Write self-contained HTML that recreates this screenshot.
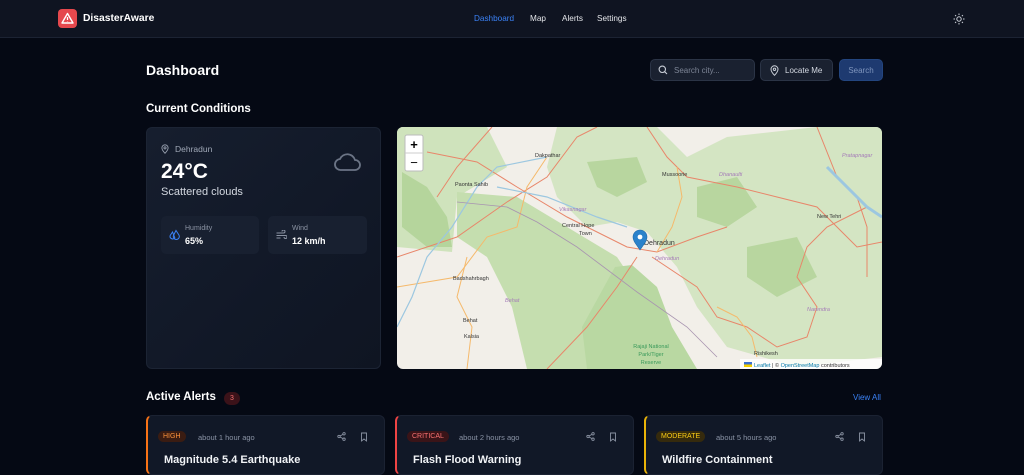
<!DOCTYPE html>
<html><head><meta charset="utf-8"><style>
*{box-sizing:border-box;margin:0;padding:0}
body{width:1024px;height:469px;overflow:hidden;background:#050914;font-family:"Liberation Sans",sans-serif;color:#fff;position:relative}
.abs{position:absolute}
nav{position:absolute;left:0;top:0;width:1024px;height:38px;background:#0f1421;border-bottom:1px solid #1c2333}
.btn{position:absolute;border:1px solid #2b3446;background:#1a2130;border-radius:5px;font-size:8px;color:#d5dae3;display:flex;align-items:center}
.card{position:absolute;background:#111827;border-radius:6px;top:415px;height:60px;border:1px solid #1b2232}
.tag{position:absolute;left:10px;top:15px;font-size:7px;padding:2px 5px;border-radius:7px}
.ago{position:absolute;top:17px;font-size:7.5px;color:#8a93a5}
.ttl{position:absolute;left:16px;top:38px;font-size:11px;font-weight:bold;color:#f1f3f6}
</style></head><body>
<nav>
<div class="abs" style="left:58px;top:9px;width:19px;height:19px;background:#e5484d;border-radius:4px"><svg width="19" height="19" viewBox="0 0 19 19"><path d="M9.5 4.5L15 14H4z" fill="none" stroke="#fff" stroke-width="1.4" stroke-linejoin="round"/><path d="M9.5 8v3M9.5 12.4v.3" stroke="#fff" stroke-width="1.3"/></svg></div>
<div class="abs" style="left:83px;top:13px;font-size:10.3px;font-weight:bold">DisasterAware</div>
<div class="abs" style="left:474px;top:14px;font-size:8.2px;color:#3b82f6">Dashboard</div>
<div class="abs" style="left:530px;top:14px;font-size:8.2px;color:#e5e7eb">Map</div>
<div class="abs" style="left:562px;top:14px;font-size:8.2px;color:#e5e7eb">Alerts</div>
<div class="abs" style="left:597px;top:14px;font-size:8.2px;color:#e5e7eb">Settings</div>
<svg class="abs" style="left:953px;top:13px" width="12" height="12" viewBox="0 0 12 12" stroke="#cbd0d8" stroke-width="1" fill="none"><circle cx="6" cy="6" r="2.2"/><path d="M6 0.5v1.5M6 10v1.5M0.5 6h1.5M10 6h1.5M2.1 2.1l1 1M8.9 8.9l1 1M2.1 9.9l1-1M8.9 3.1l1-1"/></svg>
</nav>
<div class="abs" style="left:146px;top:62px;font-size:14px;font-weight:bold">Dashboard</div>
<div class="btn" style="left:650px;top:59px;width:105px;height:22px"><svg style="margin:0 6px 0 7px" width="10" height="10" viewBox="0 0 10 10" fill="none" stroke="#c8cdd6" stroke-width="1.1"><circle cx="4.3" cy="4.3" r="3.2"/><path d="M6.7 6.7L9 9"/></svg><span style="color:#7d8596">Search city...</span></div>
<div class="btn" style="left:760px;top:59px;width:73px;height:22px"><svg style="margin:0 6px 0 9px" width="9" height="11" viewBox="0 0 9 11" fill="none" stroke="#c8cdd6" stroke-width="1"><path d="M4.5 10.3S1 6.8 1 4.3a3.5 3.5 0 017 0c0 2.5-3.5 6-3.5 6z"/><circle cx="4.5" cy="4.3" r="1.2"/></svg>Locate Me</div>
<div class="btn" style="left:839px;top:59px;width:44px;height:22px;background:#1e3a70;border-color:#23457f;color:#7f95bd;justify-content:center">Search</div>
<div class="abs" style="left:146px;top:103px;font-size:11.5px;font-weight:bold">Current Conditions</div>
<div class="abs" style="left:146px;top:127px;width:235px;height:242px;border-radius:6px;background:linear-gradient(135deg,#161e2e,#111827 60%,#0f1522);border:1px solid #1c2434">
<svg class="abs" style="left:14px;top:16px" width="8" height="10" viewBox="0 0 9 11" fill="none" stroke="#9aa2b1" stroke-width="1"><path d="M4.5 10.3S1 6.8 1 4.3a3.5 3.5 0 017 0c0 2.5-3.5 6-3.5 6z"/><circle cx="4.5" cy="4.3" r="1.2"/></svg>
<div class="abs" style="left:28px;top:16px;font-size:8.5px;color:#a1a9b8">Dehradun</div>
<div class="abs" style="left:14px;top:32px;font-size:21px;font-weight:bold">24°C</div>
<div class="abs" style="left:14px;top:58px;font-size:11px;color:#d3d8e0">Scattered clouds</div>
<svg class="abs" style="left:186px;top:22px" width="29" height="22" viewBox="0 0 29 22" fill="none" stroke="#6b7485" stroke-width="1.8"><path d="M8 20h14a5 5 0 000-10 8 8 0 00-15-1A5.5 5.5 0 008 20z"/></svg>
<div class="abs" style="left:14px;top:88px;width:98px;height:38px;background:#182030;border-radius:5px">
<svg class="abs" style="left:8px;top:13px" width="11" height="12" viewBox="0 0 11 12" fill="none" stroke="#3b82f6" stroke-width="1"><path d="M3.5 3L1.2 6.5a2.6 2.6 0 004.6 2.3z"/><path d="M7 1.5L4.7 6a3 3 0 105.2 0z"/></svg>
<div class="abs" style="left:24px;top:9px;font-size:7px;color:#8b93a3">Humidity</div>
<div class="abs" style="left:24px;top:20px;font-size:9px;font-weight:bold">65%</div></div>
<div class="abs" style="left:121px;top:88px;width:99px;height:38px;background:#182030;border-radius:5px">
<svg class="abs" style="left:8px;top:14px" width="11" height="10" viewBox="0 0 11 10" fill="none" stroke="#8b93a3" stroke-width="1"><path d="M0.5 3h7a1.5 1.5 0 10-1.5-1.5M0.5 5.5h9a1.5 1.5 0 11-1.5 1.5M0.5 8h4"/></svg>
<div class="abs" style="left:24px;top:9px;font-size:7px;color:#8b93a3">Wind</div>
<div class="abs" style="left:24px;top:20px;font-size:9px;font-weight:bold">12 km/h</div></div>
</div>
<div class="abs" style="left:397px;top:127px;width:485px;height:242px;border-radius:6px;overflow:hidden;background:#f2efe9">
<svg width="485" height="242" viewBox="0 0 485 242" style="display:block" font-family="Liberation Sans" font-size="5.5">
<path d="M0 0H90L110 40 60 70 55 125 0 120z" fill="#cfe3bc"/>
<path d="M160 0H260L290 30 330 10 420 0H485V230L400 240 330 220 300 180 280 140 250 105 220 95 190 100 160 70 150 40z" fill="#cfe3bc" opacity=".85"/>
<path d="M60 65L120 70 170 100 220 130 240 160 230 200 200 242H130L115 180 90 130 60 110z" fill="#c5deaf"/>
<path d="M218 140L235 138 260 160 275 200 300 242H190L185 200z" fill="#b9d8a2"/>
<path d="M5 45L30 60 50 90 55 120 30 120 5 100z" fill="#b5d59c"/>
<path d="M190 35L240 30 250 55 220 70 200 60z M300 60L340 50 360 80 330 100 300 90z M350 120L400 110 420 150 380 170 350 150z" fill="#b8d69f"/>
<g fill="none" stroke="#e8866a" stroke-width="1">
<path d="M0 130L60 110 110 75 150 50 180 10 200 0"/><path d="M30 25L80 35 120 60 170 90 230 120 260 125 300 110 330 100"/><path d="M240 130L220 160 190 200 150 242"/><path d="M255 130L300 160 320 190 350 200 380 220 410 210 420 180 400 150 410 120 430 100 470 80 485 90"/><path d="M250 0L270 30 290 50 340 60 380 70 420 80 440 100 460 120 485 115"/><path d="M420 0L440 50 460 70 470 100 470 150"/><path d="M95 0L60 40 40 70"/>
</g>
<g fill="none" stroke="#f5b96b" stroke-width="1"><path d="M0 160L60 150 90 110 120 100 130 60 150 30"/><path d="M70 130L60 170 75 200 70 242"/><path d="M280 40L285 70 275 100 260 125"/><path d="M320 180L340 190 355 210 360 230"/></g>
<g fill="none" stroke="#9cc7e0" stroke-width="1.2"><path d="M0 200L15 170 30 130 55 100 80 60 100 40 150 30"/><path d="M100 60L150 70 200 90 230 100"/><path d="M430 40L450 60 470 80 485 90" stroke-width="3"/></g>
<g fill="none" stroke="#a894b0" stroke-width=".8"><path d="M60 75L110 80 140 95 180 120 220 150 240 165 290 200 320 230"/></g>
<g fill="#333"><text x="138" y="30">Dakpathar</text><text x="58" y="59">Paonta Sahib</text><text x="265" y="49">Mussoorie</text><text x="165" y="100">Central Hope</text><text x="182" y="108">Town</text><text x="56" y="153">Badshahrbagh</text><text x="66" y="195">Behat</text><text x="67" y="211">Kalsia</text><text x="420" y="91">New Tehri</text><text x="357" y="228">Rishikesh</text><text x="247" y="118" font-size="7">Dehradun</text></g>
<g fill="#a57cb8" font-style="italic"><text x="162" y="84">Vikasnagar</text><text x="322" y="49">Dhanaulti</text><text x="445" y="30">Pratapnagar</text><text x="258" y="133">Dehradun</text><text x="410" y="184">Narendra</text><text x="108" y="175">Behat</text></g>
<g fill="#3a9a5b" text-anchor="middle"><text x="254" y="221">Rajaji National</text><text x="254" y="229">Park/Tiger</text><text x="254" y="237">Reserve</text></g>
<path d="M243 123c-4-6-7-9-7-13a7 7 0 0114 0c0 4-3 7-7 13z" fill="#2b82cb" stroke="#1e6aa8" stroke-width=".6"/><circle cx="243" cy="110" r="2.4" fill="#fff"/>
<rect x="8" y="8" width="18" height="36" rx="2" fill="#fff" stroke="#bbb"/><line x1="8" y1="26" x2="26" y2="26" stroke="#ccc"/>
<text x="17" y="22" font-size="13" text-anchor="middle" fill="#000" font-weight="bold">+</text><text x="17" y="40" font-size="13" text-anchor="middle" fill="#000">−</text>
<rect x="343" y="232" width="142" height="10" fill="#fff" opacity=".8"/><rect x="347" y="235" width="8" height="2.5" fill="#3a6fd1"/><rect x="347" y="237.5" width="8" height="2.5" fill="#f5d000"/>
<text x="357" y="240" fill="#0078a8">Leaflet <tspan fill="#333">| © </tspan>OpenStreetMap<tspan fill="#333"> contributors</tspan></text>
</svg></div>
<div class="abs" style="left:146px;top:391px;font-size:11.5px;font-weight:bold">Active Alerts</div>
<div class="abs" style="left:224px;top:392px;width:16px;height:13px;border-radius:7px;background:#3b1219;color:#f87171;font-size:7px;text-align:center;line-height:13px">3</div>
<div class="abs" style="left:853px;top:393px;font-size:8px;color:#3b82f6">View All</div>
<div class="card" style="left:146px;width:239px;border-left:2px solid #f97316"><div class="tag" style="background:#3a1c12;color:#fb923c">HIGH</div><div class="ago" style="left:50px">about 1 hour ago</div><div class="ttl">Magnitude 5.4 Earthquake</div></div>
<div class="card" style="left:395px;width:239px;border-left:2px solid #ef4444"><div class="tag" style="background:#3a1418;color:#f87171">CRITICAL</div><div class="ago" style="left:62px">about 2 hours ago</div><div class="ttl">Flash Flood Warning</div></div>
<div class="card" style="left:644px;width:239px;border-left:2px solid #eab308"><div class="tag" style="background:#352a0d;color:#facc15">MODERATE</div><div class="ago" style="left:70px">about 5 hours ago</div><div class="ttl">Wildfire Containment</div></div>
<svg class="abs" style="left:337px;top:432px" width="9" height="9" viewBox="0 0 9 9" fill="none" stroke="#8b93a3" stroke-width=".9"><circle cx="7" cy="1.8" r="1.2"/><circle cx="2" cy="4.5" r="1.2"/><circle cx="7" cy="7.2" r="1.2"/><path d="M3 4l3-1.6M3 5l3 1.6"/></svg>
<svg class="abs" style="left:586px;top:432px" width="9" height="9" viewBox="0 0 9 9" fill="none" stroke="#8b93a3" stroke-width=".9"><circle cx="7" cy="1.8" r="1.2"/><circle cx="2" cy="4.5" r="1.2"/><circle cx="7" cy="7.2" r="1.2"/><path d="M3 4l3-1.6M3 5l3 1.6"/></svg>
<svg class="abs" style="left:835px;top:432px" width="9" height="9" viewBox="0 0 9 9" fill="none" stroke="#8b93a3" stroke-width=".9"><circle cx="7" cy="1.8" r="1.2"/><circle cx="2" cy="4.5" r="1.2"/><circle cx="7" cy="7.2" r="1.2"/><path d="M3 4l3-1.6M3 5l3 1.6"/></svg>
<svg class="abs" style="left:360px;top:432px" width="8" height="10" viewBox="0 0 8 10" fill="none" stroke="#8b93a3" stroke-width=".9"><path d="M1.5 1h5v8L4 7 1.5 9z"/></svg>
<svg class="abs" style="left:609px;top:432px" width="8" height="10" viewBox="0 0 8 10" fill="none" stroke="#8b93a3" stroke-width=".9"><path d="M1.5 1h5v8L4 7 1.5 9z"/></svg>
<svg class="abs" style="left:858px;top:432px" width="8" height="10" viewBox="0 0 8 10" fill="none" stroke="#8b93a3" stroke-width=".9"><path d="M1.5 1h5v8L4 7 1.5 9z"/></svg>
</body></html>
